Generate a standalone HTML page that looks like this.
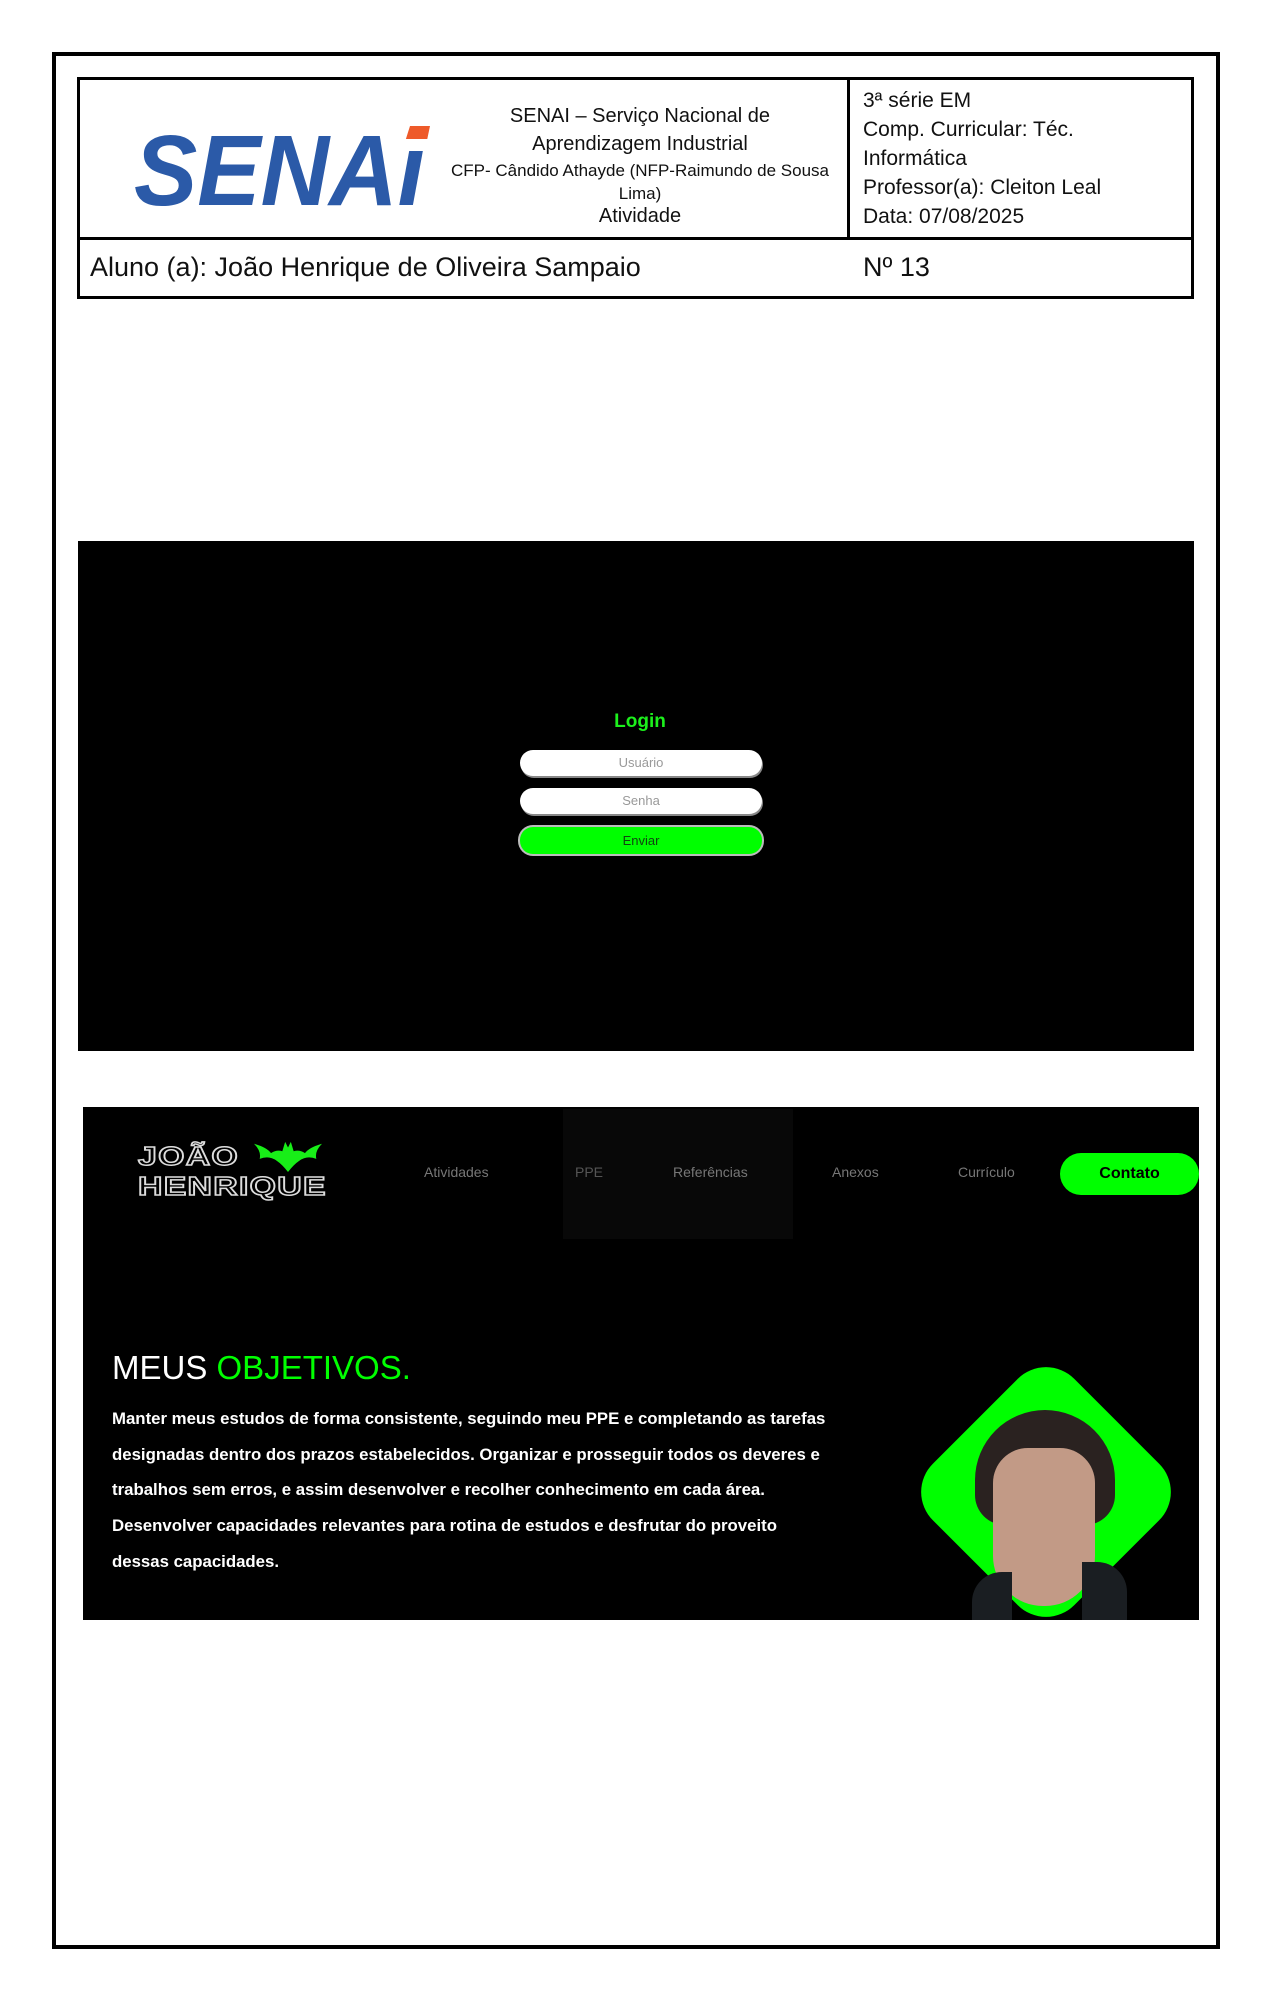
<!DOCTYPE html>
<html><head><meta charset="utf-8"><style>
*{margin:0;padding:0;box-sizing:border-box}
body{width:1271px;height:2000px;background:#fff;position:relative;overflow:hidden;font-family:"Liberation Sans",sans-serif}
.a{position:absolute}
.n{font-family:"Liberation Sans Narrow","Liberation Sans",sans-serif;color:#111;white-space:nowrap}
.c{text-align:center}
</style></head><body>
<div class="a" style="left:52px;top:52px;width:1168px;height:1897px;border:4px solid #000"></div>
<div class="a" style="left:77px;top:77px;width:1117px;height:222px;border:3px solid #000"></div>
<div class="a" style="left:77px;top:237px;width:1117px;height:3px;background:#000"></div>
<div class="a" style="left:847px;top:77px;width:3px;height:161px;background:#000"></div>
<svg class="a" style="left:128px;top:121px" width="310" height="95" viewBox="0 0 310 95">
<text x="6" y="84" font-family="Liberation Sans" font-weight="bold" font-style="italic" font-size="100" fill="#2b5aa8" textLength="290" lengthAdjust="spacingAndGlyphs">SENAI</text>
<polygon points="282,5 302,5 298,24 276,24" fill="#ee5a2a"/>
<rect x="276" y="18" width="26" height="12" fill="#fff"/>
</svg>
<div class="a n c" style="left:440px;top:102px;width:400px;font-size:20px;line-height:28px">SENAI – Serviço Nacional de<br>Aprendizagem Industrial</div>
<div class="a n c" style="left:440px;top:159px;width:400px;font-size:17px;line-height:23px">CFP- Cândido Athayde (NFP-Raimundo de Sousa<br>Lima)</div>
<div class="a n c" style="left:440px;top:205px;width:400px;font-size:20px">Atividade</div>
<div class="a n" style="left:863px;top:86px;font-size:21px;line-height:29px">3ª série EM<br>Comp. Curricular: Téc.<br>Informática<br>Professor(a): Cleiton Leal<br>Data: 07/08/2025</div>
<div class="a n" style="left:90px;top:252px;font-size:27px">Aluno (a): João Henrique de Oliveira Sampaio</div>
<div class="a n" style="left:863px;top:252px;font-size:27px">Nº 13</div>

<div class="a" style="left:78px;top:541px;width:1116px;height:510px;background:#000"></div>
<div class="a c" style="left:540px;top:711px;width:200px;color:#1cf01c;font-weight:bold;font-size:19px">Login</div>
<div class="a c" style="left:520px;top:750px;width:242px;height:26px;border-radius:13px;background:#fff;color:#999;font-size:13px;line-height:26px;box-shadow:1px 2px 0 #888">Usuário</div>
<div class="a c" style="left:520px;top:788px;width:242px;height:26px;border-radius:13px;background:#fff;color:#999;font-size:13px;line-height:26px;box-shadow:1px 2px 0 #888">Senha</div>
<div class="a c" style="left:520px;top:827px;width:242px;height:27px;border-radius:13px;background:#0f0;color:#114411;font-size:13px;line-height:27px;box-shadow:0 0 0 2px #bbb">Enviar</div>

<div class="a" style="left:83px;top:1107px;width:1116px;height:513px;background:#000"></div>
<div class="a" style="left:563px;top:1109px;width:230px;height:130px;background:#080808"></div>
<div class="a" style="left:138px;top:1141px;color:#000;-webkit-text-stroke:1.5px #ddd;font-weight:900;font-size:26px;line-height:30px;letter-spacing:1px;transform:scaleX(1.3);transform-origin:left">JOÃO<br>HENRIQUE</div>
<svg class="a" style="left:254px;top:1139px" width="68" height="34" viewBox="0 0 72 34"><path d="M0 4 Q14 8 18 14 Q24 10 30 12 L33 2 L36 8 L39 2 L42 12 Q48 10 54 14 Q58 8 72 4 Q64 12 66 20 Q56 16 48 22 Q42 26 36 34 Q30 26 24 22 Q16 16 6 20 Q8 12 0 4Z" fill="#18ee18"/></svg>
<div class="a" style="left:424px;top:1164px;color:#777;font-size:14px">Atividades</div>
<div class="a" style="left:575px;top:1164px;color:#555;font-size:14px">PPE</div>
<div class="a" style="left:673px;top:1164px;color:#777;font-size:14px">Referências</div>
<div class="a" style="left:832px;top:1164px;color:#777;font-size:14px">Anexos</div>
<div class="a" style="left:958px;top:1164px;color:#777;font-size:14px">Currículo</div>
<div class="a c" style="left:1060px;top:1153px;width:139px;height:42px;border-radius:21px;background:#0f0;color:#000;font-weight:bold;font-size:16px;line-height:42px">Contato</div>
<div class="a" style="left:112px;top:1349px;color:#fff;font-size:33px;font-weight:500">MEUS <span style="color:#0f0">OBJETIVOS.</span></div>
<div class="a" style="left:112px;top:1401px;color:#fff;font-size:16.8px;font-weight:bold;line-height:35.7px;white-space:nowrap">Manter meus estudos de forma consistente, seguindo meu PPE e completando as tarefas<br>designadas dentro dos prazos estabelecidos. Organizar e prosseguir todos os deveres e<br>trabalhos sem erros, e assim desenvolver e recolher conhecimento em cada área.<br>Desenvolver capacidades relevantes para rotina de estudos e desfrutar do proveito<br>dessas capacidades.</div>
<div class="a" style="left:946px;top:1392px;width:200px;height:200px;background:#0f0;border-radius:40px;transform:rotate(45deg)"></div>
<div class="a" style="left:975px;top:1410px;width:140px;height:115px;background:#2a2220;border-radius:70px 70px 30px 30px"></div>
<div class="a" style="left:993px;top:1448px;width:102px;height:158px;background:#c29a86;border-radius:35px 35px 50px 50px"></div>
<div class="a" style="left:972px;top:1572px;width:40px;height:48px;background:#1a1e22;border-radius:30px 0 0 0"></div>
<div class="a" style="left:1082px;top:1562px;width:45px;height:58px;background:#1a1e22;border-radius:0 30px 0 0"></div>
</body></html>
